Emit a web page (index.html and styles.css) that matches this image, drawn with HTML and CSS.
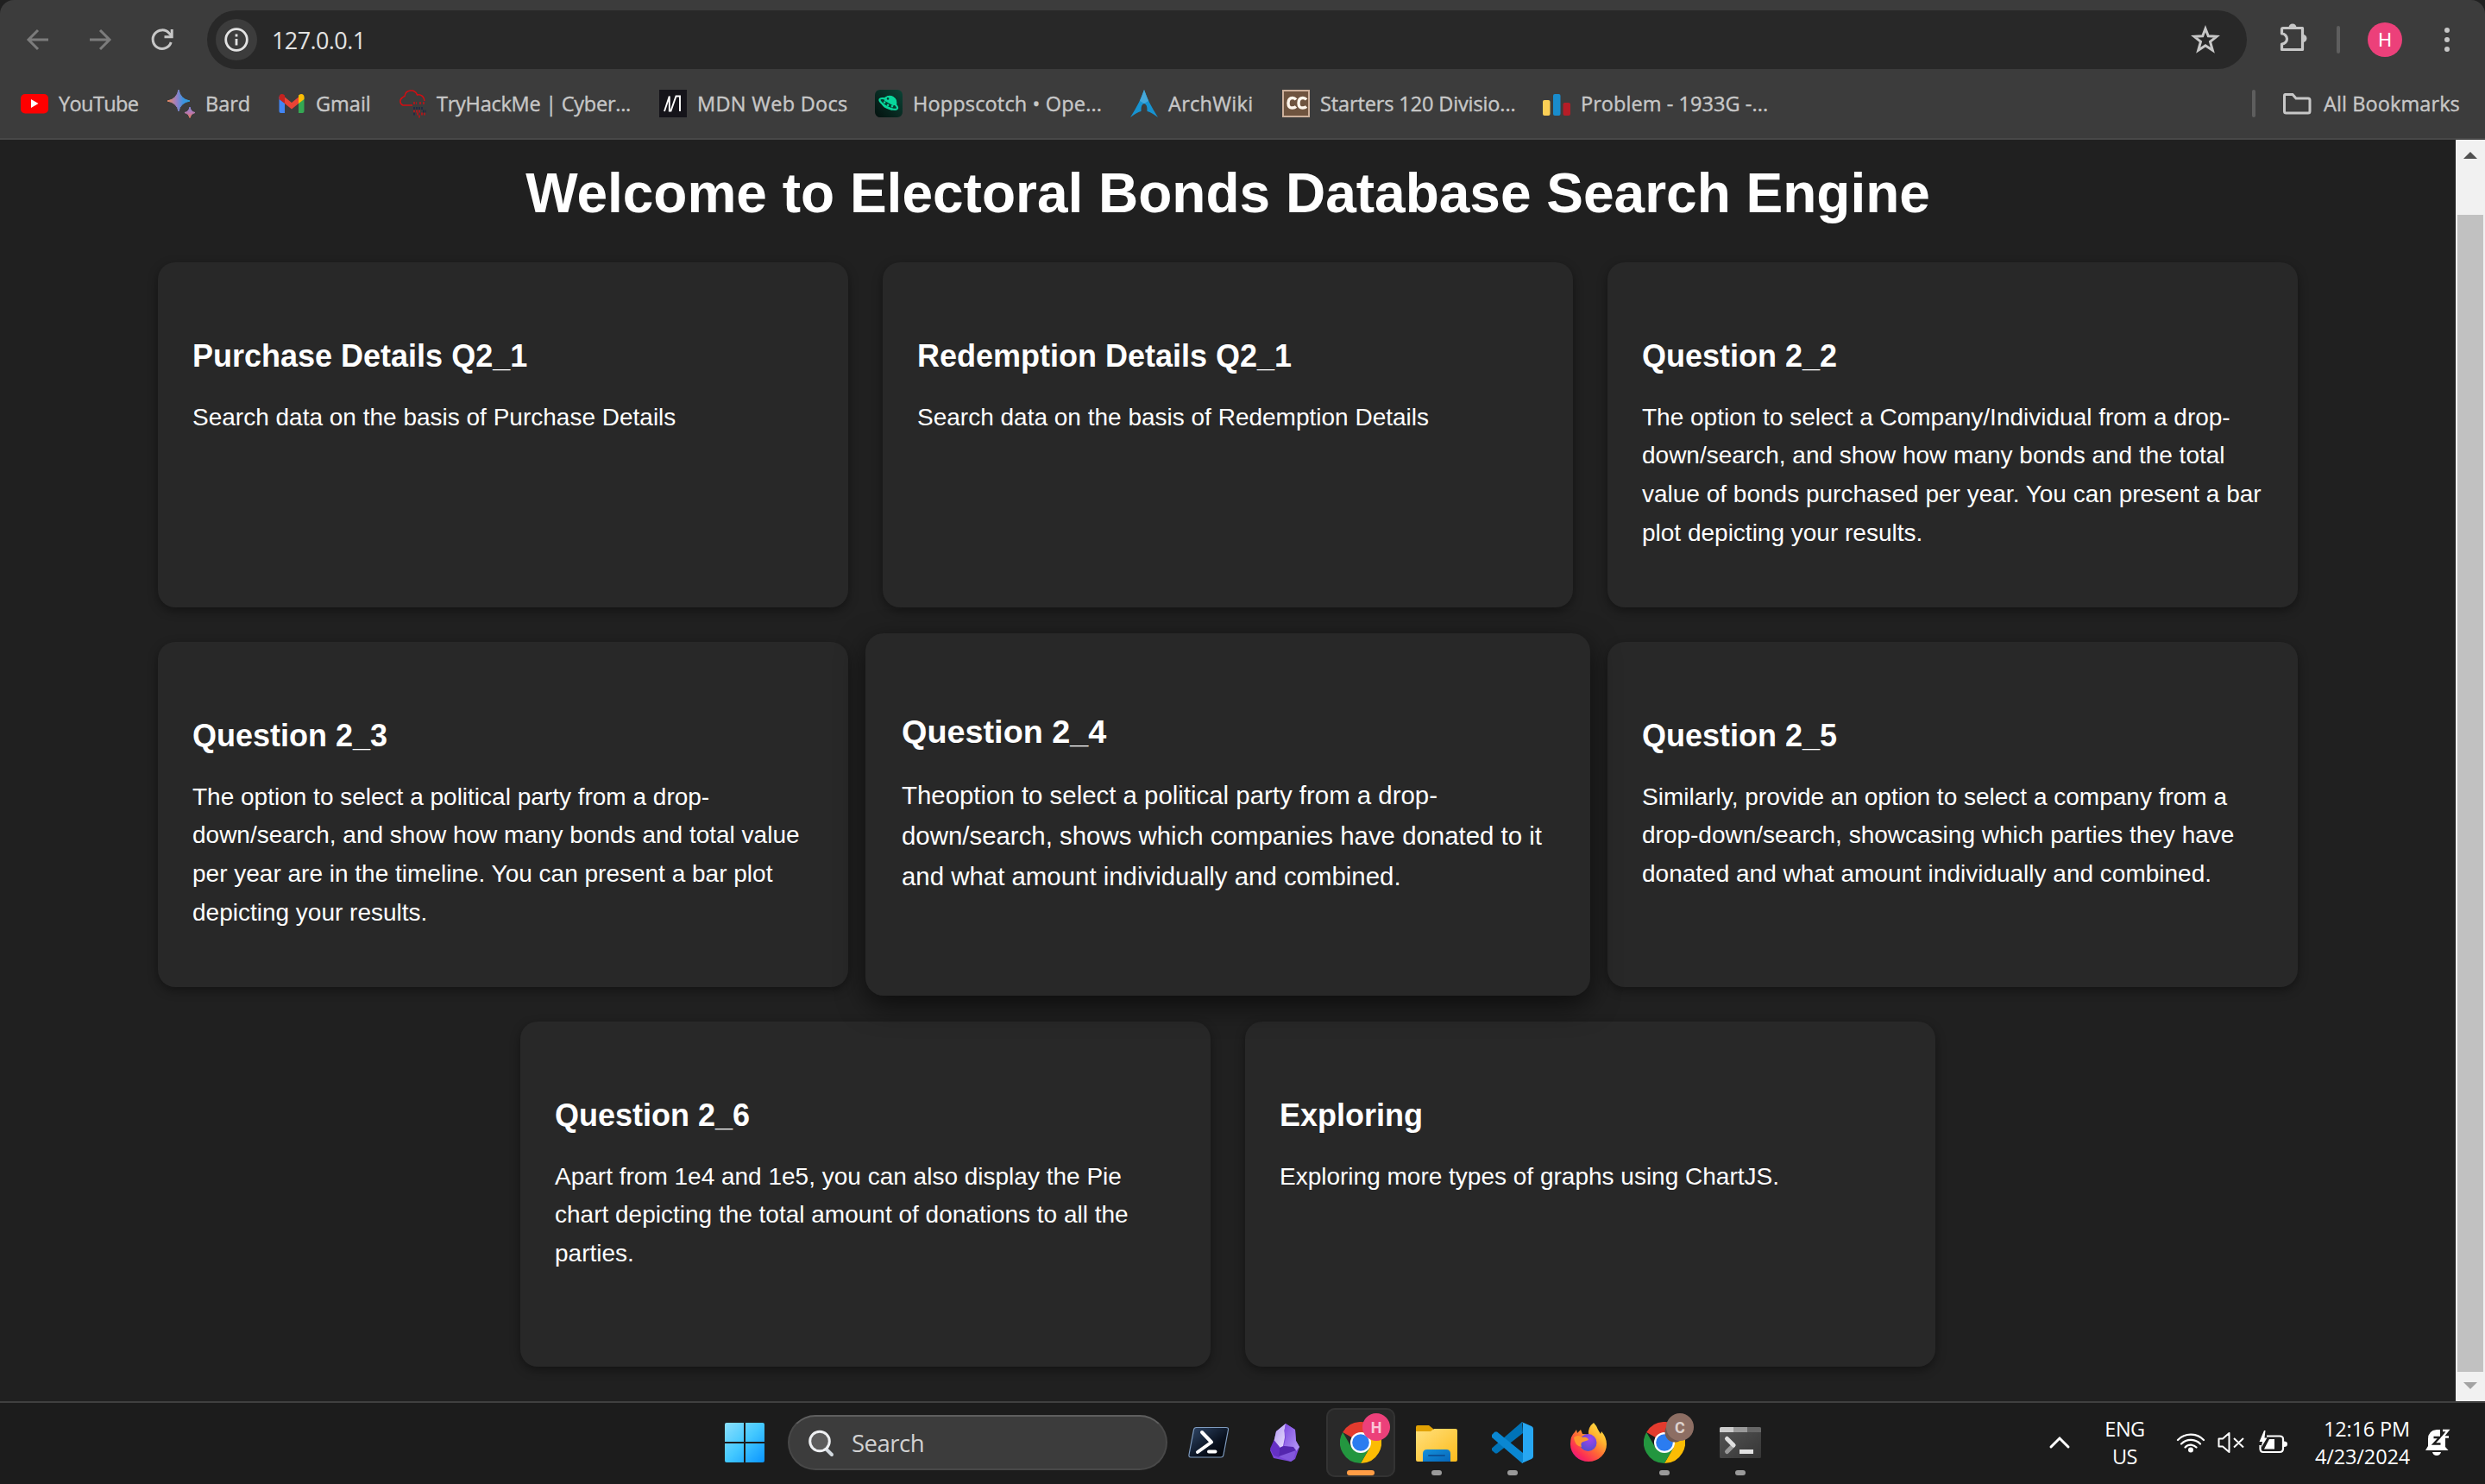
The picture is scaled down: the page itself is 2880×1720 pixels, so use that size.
FILE: index.html
```html
<!DOCTYPE html>
<html lang="en">
<head>
<meta charset="utf-8">
<title>Electoral Bonds Database Search Engine</title>
<link rel="stylesheet" href="styles.css">
</head>
<body>
<svg width="0" height="0" class="defs" aria-hidden="true">
  <defs>
    <linearGradient id="bard" x1="0" y1="0" x2="1" y2="0"><stop offset="0" stop-color="#f08a5c"/><stop offset=".4" stop-color="#9a7fc4"/><stop offset=".7" stop-color="#3d93e0"/><stop offset="1" stop-color="#2aa0e0"/></linearGradient>
    <linearGradient id="bard2" x1="0" y1="0" x2="0" y2="1"><stop offset="0" stop-color="#7f86e0"/><stop offset=".6" stop-color="#c078a8"/><stop offset="1" stop-color="#f0805c"/></linearGradient>
    <linearGradient id="hop" x1="1" y1="0" x2="0" y2="1"><stop offset="0" stop-color="#0b4436"/><stop offset="1" stop-color="#04110e"/></linearGradient>
    <linearGradient id="win" x1="0" y1="0" x2="46" y2="46" gradientUnits="userSpaceOnUse"><stop offset="0" stop-color="#8be0fd"/><stop offset=".5" stop-color="#43c8ff"/><stop offset="1" stop-color="#0a95ff"/></linearGradient>
    <linearGradient id="ps" x1="0" y1="0" x2="1" y2="1"><stop offset="0" stop-color="#31496a"/><stop offset=".6" stop-color="#0a1220"/><stop offset="1" stop-color="#000"/></linearGradient>
    <linearGradient id="folder" x1="0" y1="0" x2="1" y2="1"><stop offset="0" stop-color="#ffe07c"/><stop offset="1" stop-color="#fdbb1c"/></linearGradient>
    <linearGradient id="tray" x1="0" y1="0" x2="1" y2="1"><stop offset="0" stop-color="#1391dc"/><stop offset="1" stop-color="#0766b8"/></linearGradient>
    <linearGradient id="fox" x1="1" y1="0" x2=".2" y2="1"><stop offset="0" stop-color="#fff44f"/><stop offset=".35" stop-color="#ffb42e"/><stop offset=".6" stop-color="#ff6a35"/><stop offset=".85" stop-color="#fb2b57"/><stop offset="1" stop-color="#e3158a"/></linearGradient>
    <radialGradient id="globe" cx=".6" cy=".3" r=".8"><stop offset="0" stop-color="#a044ee"/><stop offset="1" stop-color="#4a4fc8"/></radialGradient>
    <linearGradient id="obs" x1="0" y1="0" x2="1" y2="1"><stop offset="0" stop-color="#b49af2"/><stop offset="1" stop-color="#e6dcfc"/></linearGradient>
    <linearGradient id="obsr" x1="0" y1="0" x2="1" y2="1"><stop offset="0" stop-color="#7c48e0"/><stop offset="1" stop-color="#b79bf6"/></linearGradient>
    <linearGradient id="term" x1="0" y1="0" x2="1" y2="1"><stop offset="0" stop-color="#555"/><stop offset="1" stop-color="#363636"/></linearGradient>
    <symbol id="chrome" viewBox="0 0 48 48">
      <path d="M24 12H44.800A24 24 0 0 1 24 48L34.400 30z" fill="#fbbc04"/>
      <path d="M3.200 12A24 24 0 0 1 44.800 12H24L13.600 18z" fill="#e33b2e"/>
      <path d="M3.200 12 13.600 30 24 36 34.400 30 24 48A24 24 0 0 1 3.200 12z" fill="#23963f"/>
      <circle cx="24" cy="24" r="12" fill="#fff"/><circle cx="24" cy="24" r="9.800" fill="#2b7cf0"/>
    </symbol>
  </defs>
</svg>

<header class="browser">
  <div class="toolbar">
    <svg class="nav-icon dim" viewBox="0 0 32 32"><path d="M28 16H6M16 5 5 16l11 11"/></svg>
    <svg class="nav-icon dim" viewBox="0 0 32 32"><path d="M4 16h22M16 5l11 11-11 11"/></svg>
    <svg class="nav-icon" viewBox="0 0 32 32"><path d="M26.200 19A10.800 10.800 0 1 1 24 8.500L27 11.500"/><path d="M27.200 4V12.700H18.500"/></svg>
    <div class="address">
      <span class="site-info"><svg viewBox="0 0 32 32"><circle cx="16" cy="16" r="12.300"/><path d="M16 15v7.500M16 9.500v3"/></svg></span>
      <span class="url">127.0.0.1</span>
      <svg class="star" viewBox="0 0 32 32"><path d="M16 3.200 19.300 11.700 29 12.300 21.500 18.300 24.300 28.200 16 22.700 7.700 28.200 10.500 18.300 3 12.300 12.700 11.700Z"/></svg>
    </div>
    <svg class="puzzle" viewBox="0 0 36 36"><path class="line" d="M6 6.500H28.500V31.500H4.500V25A4.500 4.500 0 0 0 4.500 13V8Q4.500 6.500 6 6.500Z"/><path class="solid" d="M12.500 6a4.500 4.500 0 0 1 9 0zM29 14a4.500 4.500 0 0 1 0 9z"/></svg>
    <span class="divider"></span>
    <span class="avatar">H</span>
    <svg class="menu" viewBox="0 0 8 30"><circle cx="4" cy="4" r="3"/><circle cx="4" cy="15" r="3"/><circle cx="4" cy="26" r="3"/></svg>
  </div>
  <div class="bookmarks">
    <nav class="links">
      <a><svg viewBox="0 0 32 32"><rect y="5" width="32" height="22.500" rx="5" fill="#f00"/><path d="M12 11v10l8.500-5z" fill="#fff"/></svg><span class="bm-youtube">YouTube</span></a>
      <a><svg viewBox="0 0 32 32"><path d="M13 0Q15 11 26 13Q15 15 13 25Q11 15 0 13Q11 11 13 0Z" fill="url(#bard)" stroke="url(#bard)"/><path d="M26 20Q27 25.500 32 26.500Q27 27.500 26 32.500Q25 27.500 20 26.500Q25 25.500 26 20Z" fill="url(#bard2)" stroke="url(#bard2)"/></svg><span>Bard</span></a>
      <a><svg viewBox="0 0 32 32"><path d="M1.500 8v17a2 2 0 0 0 2 2H8V12z" fill="#4285f4"/><path d="M24 12v15h4.500a2 2 0 0 0 2-2V8z" fill="#34a853"/><path d="M8 8.500 16 15l8-6.500V16l-8 6.500L8 16z" fill="#ea4335"/><path d="M1.500 8.500C1.500 5 5 4 8 6.500V16l-6.500-5z" fill="#c5221f"/><path d="M30.500 8.500C30.500 5 27 4 24 6.500V16l6.500-5z" fill="#fbbc04"/></svg><span>Gmail</span></a>
      <a><svg viewBox="0 0 32 32"><path d="M16 18H5A5 5 0 0 1 4.500 9 8 8 0 0 1 7 7.500 7.500 7.500 0 0 1 21.500 6 7 7 0 0 1 30 13" fill="none" stroke="#d40d12" stroke-width="1.500"/><path d="M17 15.500h4m3 0h2m2 0h3M17 25h8M21 28h2m3 0h6M23 31h3" stroke="#a51a1d" stroke-width="3" stroke-dasharray="2 1"/><path d="M17 21.500h12M28 25h4M17 28h3" stroke="#212c42" stroke-width="3" stroke-dasharray="2 1"/></svg><span class="bm-thm">TryHackMe | Cyber...</span></a>
      <a><svg viewBox="0 0 32 32"><path fill="#15141a" d="M0 0h32v32H0z"/><path d="M5.800 25 11.300 8H12.300V25H13.300L18.800 8M17.300 8V25M17.300 25 23.300 8H24.300V25" fill="none" stroke="#fff" stroke-width="0"/><path d="M6 25 11.800 7.500V24.500H13.500L19.500 7.500H24V25" fill="none" stroke="#fff" stroke-width="1.900"/></svg><span class="bm-mdn">MDN Web Docs</span></a>
      <a><svg viewBox="0 0 32 32"><rect width="32" height="32" rx="6" fill="url(#hop)"/><g transform="rotate(28 16 16)"><path d="M8 15A8.500 8.500 0 0 1 25 15V19A9 5 0 0 1 8 19Z" fill="#08d89c"/><ellipse cx="16" cy="16.500" rx="11.500" ry="4" fill="#073c30" stroke="#08d89c" stroke-width="2.200"/><path d="M9 12A8 8 0 0 1 24 12L22 15.500H10Z" fill="#08d89c"/><g fill="#08d89c"><circle cx="11" cy="17" r="1.300"/><circle cx="16" cy="18" r="1.300"/><circle cx="21" cy="17" r="1.300"/></g><circle cx="12.500" cy="11.500" r="1.300" fill="#073c30"/></g></svg><span class="bm-hop">Hoppscotch • Ope...</span></a>
      <a><svg viewBox="0 0 32 32"><path d="M16 0Q12 13 0 32Q8 26 12.500 25Q12 17 16 16Q20 17 19.500 25Q24 26 32 32Q20 13 16 0Z" fill="#1793d1"/><path d="M16 0 11 13 16 16l5-3z" fill="#45a8db"/></svg><span class="bm-arch">ArchWiki</span></a>
      <a><svg viewBox="0 0 32 32"><path fill="#6f543f" stroke="#cdb09b" stroke-width="2" d="M1 1h30v30H1z"/><path d="M16 11.500Q14.500 9.500 12 9.500Q7 9.500 7 15.500T12 21Q14.500 21 16 19.500M28 11.500Q26.500 9.500 24 9.500Q19 9.500 19 15.500T24 21Q26.500 21 28 19.500" fill="none" stroke="#fff6ec" stroke-width="3.400"/></svg><span class="bm-starters">Starters 120 Divisio...</span></a>
      <a><svg viewBox="0 0 32 32"><rect y="12" width="8.500" height="18" rx="2" fill="#fbcf56"/><rect x="12" y="5" width="8.500" height="25" rx="2" fill="#198ccc"/><rect x="23.500" y="15" width="8.500" height="15" rx="2" fill="#b51d27"/></svg><span class="bm-problem">Problem - 1933G -...</span></a>
    </nav>
    <span class="divider"></span>
    <a class="all"><svg class="folder" viewBox="0 0 36 28"><path d="M4.500 3.500H13L17 8H31Q33 8 33 10V23Q33 25 31 25H5.500Q3.500 25 3.500 23V5Q3.500 3.500 4.500 3.500Z"/></svg><span>All Bookmarks</span></a>
  </div>
</header>

<main class="viewport">
  <div class="page">
    <h1>Welcome to Electoral Bonds Database Search Engine</h1>
    <section class="cards">
      <article class="card"><h2>Purchase Details Q2_1</h2><p>Search data on the basis of Purchase Details</p></article>
      <article class="card"><h2>Redemption Details Q2_1</h2><p>Search data on the basis of Redemption Details</p></article>
      <article class="card"><h2>Question 2_2</h2><p>The option to select a Company/Individual from a drop-down/search, and show how many bonds and the total value of bonds purchased per year. You can present a bar plot depicting your results.</p></article>
      <article class="card"><h2>Question 2_3</h2><p>The option to select a political party from a drop-down/search, and show how many bonds and total value per year are in the timeline. You can present a bar plot depicting your results.</p></article>
      <article class="card hovered"><h2>Question 2_4</h2><p>Theoption to select a political party from a drop-down/search, shows which companies have donated to it and what amount individually and combined.</p></article>
      <article class="card"><h2>Question 2_5</h2><p>Similarly, provide an option to select a company from a drop-down/search, showcasing which parties they have donated and what amount individually and combined.</p></article>
      <article class="card"><h2>Question 2_6</h2><p>Apart from 1e4 and 1e5, you can also display the Pie chart depicting the total amount of donations to all the parties.</p></article>
      <article class="card"><h2>Exploring</h2><p>Exploring more types of graphs using ChartJS.</p></article>
    </section>
  </div>
  <div class="scrollbar">
    <svg class="up" viewBox="0 0 16 8"><path d="M0 8 8 0l8 8z"/></svg>
    <div class="thumb"></div>
    <svg class="down" viewBox="0 0 16 8"><path d="M0 0h16L8 8z"/></svg>
  </div>
</main>

<footer class="taskbar">
  <div class="apps">
    <svg class="start" viewBox="0 0 46 46"><path fill="url(#win)" d="M2 0H22V22H0V2Q0 0 2 0ZM24 0H44Q46 0 46 2V22H24ZM0 24H22V46H2Q0 46 0 44ZM24 24H46V44Q46 46 44 46H24Z"/></svg>
    <div class="search">
      <svg viewBox="0 0 30 32"><path d="M20 23 27 30" stroke="#d2d9df" stroke-width="4" stroke-linecap="round"/><circle cx="13" cy="14.500" r="11.300" fill="#5c5c5c" stroke="#eef0f2" stroke-width="3"/></svg>
      <span>Search</span>
    </div>
    <div class="tile"><svg viewBox="0 0 48 48"><path d="M9.500 6.500H44Q47 6.500 46.500 9L41 38Q40.500 41 38 41H3Q.5 41 1 38L6.500 9Q7 6.500 9.500 6.500Z" fill="url(#ps)" stroke="#7f9cc0" stroke-width="1.200"/><path d="M16 12 27 23.500 11 35M24 34.500H31.500" fill="none" stroke="#fff" stroke-width="4" stroke-linecap="round" stroke-linejoin="round"/></svg></div>
    <div class="tile"><svg viewBox="0 0 48 48"><path d="M25 2 14 11 11 24 7 33 11 42 31 46 36 43 41 29 37 22 36 9Z" fill="#7a46d8"/><path d="M25 2 14 11 11.500 22 18 30 22 28 24 18 23.500 10Z" fill="url(#obs)"/><path d="M25 2 23.500 10 25 18 23 28 34 30 37 34 41 29 37 22 36 9Z" fill="url(#obsr)"/><path d="M11.500 21 7 31 11 39 17 41 18 29Z" fill="#6530c4"/><path d="M18 30 23 28 34 29 37 33 33 42 17 40Z" fill="#5426ae"/><path d="M17 40 37 33 34 44 31 46Z" fill="#8257dc"/></svg></div>
    <div class="tile active"><svg viewBox="0 0 48 48"><use href="#chrome"/></svg><span class="badge pink">H</span><i class="run wide"></i></div>
    <div class="tile"><svg viewBox="0 0 48 48"><path d="M2 4H15L20 8V14H0V6Q0 4 2 4Z" fill="#e2a203"/><path d="M0 11H17L21 8H46Q48 8 48 10V44Q48 46 46 46H2Q0 46 0 44Z" fill="url(#folder)"/><path d="M8 46V37Q8 32 13 32H35Q40 32 40 37V46Z" fill="url(#tray)"/><path d="M15 39H33" stroke="#0b539a" stroke-width="2" stroke-linecap="round"/></svg><i class="run"></i></div>
    <div class="tile"><svg viewBox="0 0 48 48"><path d="M35 0 0 30.500V33L4 36.500 6 36.500 36 13Z" fill="#0073b7"/><path d="M0 15 3.500 11.500 6 11.500 36 36V48L34.500 47.500 0 18Z" fill="#0a87d2"/><path d="M34.500 0 46 5Q48 6 48 8V40Q48 42 46 43L34.500 48Q36 47 36 45V3Q36 1 34.500 0Z" fill="#27a7f2"/></svg><i class="run"></i></div>
    <div class="tile"><svg viewBox="0 0 48 48"><path d="M30 1Q33 4 35 9L38 14 39 11Q45 18 45 26A21 20 0 0 1 3 26Q3 16 8 12L10 9 11 13 15 9 17 14Q21 14 24 15Q23 6 30 1Z" fill="url(#fox)"/><circle cx="23.500" cy="24" r="10" fill="url(#globe)"/><path d="M7 18Q12 14 17 18Q23 17 24 21L18 23Q14 24 16 29Q8 28 7 18Z" fill="#ff972d"/></svg></div>
    <div class="tile"><svg viewBox="0 0 48 48"><use href="#chrome"/><circle cx="36" cy="12" r="11.500" fill="#705850"/></svg><span class="badge brown">C</span><i class="run"></i></div>
    <div class="tile"><svg viewBox="0 0 48 48"><rect y="6" width="48" height="36" rx="1.500" fill="url(#term)"/><path d="M0 12V8Q0 6 2 6H16V12Z" fill="#ccc"/><path d="M16 6H32V12H16Z" fill="#999"/><path d="M32 6H46Q48 6 48 8V12H32Z" fill="#666"/><path d="M8.500 34.500 16 27" stroke="#999" stroke-width="5" stroke-linecap="round"/><path d="M8.500 19.500 16 27" stroke="#e0e0e0" stroke-width="5" stroke-linecap="round"/><path d="M23 32H39V37H23Z" fill="#e2e2e2"/></svg><i class="run"></i></div>
  </div>
  <div class="systray">
    <svg class="chevron" viewBox="0 0 24 14"><path d="M2 12 12 2 22 12"/></svg>
    <div class="lang"><span>ENG</span><span>US</span></div>
    <svg class="wifi" viewBox="0 0 34 26"><circle cx="17" cy="21.500" r="3"/><path d="M2 10A21 21 0 0 1 32 10M6 14.500A15.500 15.500 0 0 1 28 14.500M10.500 18.500A9 9 0 0 1 23.500 18.500"/></svg>
    <svg class="volume" viewBox="0 0 32 26"><path d="M1.500 8.500H6L13.500 2V24L6 17.500H1.500ZM19 8 30 18.500M30 8 19 18.500"/></svg>
    <svg class="battery" viewBox="0 0 36 28"><path class="line" d="M10 6.500H25Q29 6.500 29 10V21Q29 25 25 25H6Q2.500 25 2.500 21V17"/><path d="M7 21.500 13 10H19V21.500ZM30 12.500Q34 12.500 34 15.800T30 19ZM7 0 1.500 13H5L3.500 20 10.500 8.500H7.500L8.500 0Z"/></svg>
    <div class="clock"><span>12:16 PM</span><span>4/23/2024</span></div>
    <svg class="bell" viewBox="0 0 28 32"><path d="M3 12Q3 2 13 1L17 1V9H23V21L26.500 25H0L3 20ZM8 27H18Q17 31 13 31T8 27Z"/><path class="zz" d="M9.500 10H16.500L9.500 17.500H17.500"/><path class="zw" d="M20 2H26L20 9.500H27"/></svg>
  </div>
</footer>
</body>
</html>
```
FILE: styles.css
```css
* { box-sizing: border-box; }

body {
  margin: 0;
  width: 2880px;
  height: 1720px;
  display: flex;
  flex-direction: column;
  overflow: hidden;
  background: #202020;
  font-family: "Liberation Sans", Arial, sans-serif;
  color: #fff;
}

svg { display: block; flex: none; overflow: visible; }
.defs { position: absolute; }

/* Browser chrome */
.browser {
  height: 162px;
  flex: none;
  background: #3c3c3c;
  border-bottom: 2px solid #484848;
  border-radius: 16px 16px 0 0;
  font-family: "Open Sans", "Noto Sans", sans-serif;
}

.toolbar {
  height: 92px;
  display: flex;
  align-items: center;
  padding: 0 40px 0 28px;
}

.nav-icon {
  width: 32px;
  height: 32px;
  margin-right: 40px;
  fill: none;
  stroke: #c7c7c7;
  stroke-width: 3;
}
.nav-icon.dim { stroke: #7c7c7c; }

.address {
  width: 2364px;
  height: 68px;
  margin-left: -4px;
  display: flex;
  align-items: center;
  padding: 0 32px 0 10px;
  border-radius: 34px;
  background: #282828;
}
.site-info {
  width: 48px;
  height: 48px;
  display: grid;
  place-items: center;
  border-radius: 50%;
  background: #3c3c3c;
}
.site-info svg { width: 32px; height: 32px; fill: none; stroke: #e3e3e3; stroke-width: 2.8; }
.url {
  flex: 1;
  padding-left: 17px;
  font-size: 27px;
  letter-spacing: -0.6px;
  color: #e3e3e3;
}
.star { width: 32px; height: 32px; fill: none; stroke: #c7c7c7; stroke-width: 3; }
.puzzle { width: 36px; height: 36px; margin: -4px 32px 0 36px; }
.puzzle .line { fill: none; stroke: #c7c7c7; stroke-width: 3.2; stroke-linejoin: round; }
.puzzle .solid { fill: #c7c7c7; }
.divider { width: 4px; height: 32px; flex: none; border-radius: 2px; background: #5e5e5e; }
.avatar {
  width: 40px;
  height: 40px;
  margin: 0 auto 0 32px;
  display: grid;
  place-items: center;
  border-radius: 50%;
  background: #ec407a;
  font-family: Roboto, sans-serif;
  font-size: 22px;
}
.menu { width: 8px; height: 30px; fill: #c7c7c7; }

.bookmarks {
  height: 56px;
  display: flex;
  align-items: center;
  padding: 0 24px;
  font-size: 23.5px;
  font-weight: 500;
  -webkit-text-stroke: 0.4px #c7c7c7;
  color: #c7c7c7;
}
.links {
  width: 2586px;
  display: grid;
  grid-template-columns: 170px 128px 140px 302px 250px 296px 176px 302px 1fr;
}
.bookmarks a { display: flex; align-items: center; gap: 12px; white-space: nowrap; }
.bookmarks span { margin-top: -1px; }
.links svg { width: 32px; height: 32px; }
.bm-youtube { letter-spacing: -0.6px; }
.bm-thm { letter-spacing: -0.25px; }
.bm-mdn { letter-spacing: 0.3px; }
.bm-hop { letter-spacing: 0.15px; }
.bm-arch { letter-spacing: 0.3px; }
.bm-starters { letter-spacing: -0.12px; }
.bm-problem { letter-spacing: 0.06px; }
.all { margin-left: 30px; letter-spacing: 0.1px; }
.bookmarks .all { gap: 13px; }
.folder { width: 36px; height: 28px; fill: none; stroke: #c7c7c7; stroke-width: 3; }

/* Web page */
.viewport { height: 1462px; flex: none; display: flex; }
.page { flex: 1; overflow: hidden; }

h1 {
  height: 124px;
  margin: 0 0 18px;
  text-align: center;
  font-size: 64px;
  line-height: 124px;
}
.cards {
  display: flex;
  flex-wrap: wrap;
  justify-content: center;
  gap: 40px;
  padding: 0 160px;
}
.card {
  width: 800px;
  height: 400px;
  padding: 80px 40px 0;
  border-radius: 20px;
  background: #282828;
  box-shadow: 0 4px 12px rgba(0, 0, 0, 0.4);
}
.card h2 { margin: 0 0 20px; font-size: 36px; line-height: 57.6px; }
.card p { margin: 0; font-size: 28px; line-height: 44.8px; }
.card.hovered {
  transform: scale(1.05);
  box-shadow: 0 10px 30px rgba(0, 0, 0, 0.6);
}

.scrollbar {
  width: 34px;
  display: flex;
  flex-direction: column;
  align-items: center;
  padding: 14px 0;
  background: #f1f1f1;
}
.scrollbar svg { width: 16px; height: 8px; }
.up { fill: #505050; }
.down { fill: #a3a3a3; }
.thumb { width: 30px; height: 1341px; margin: 65px 0 12px; background: #c1c1c1; }

/* Taskbar */
.taskbar {
  height: 96px;
  flex: none;
  display: flex;
  justify-content: space-between;
  padding-left: 840px;
  border-top: 2px solid #404040;
  background: #1c1c1c;
  font-family: "Open Sans", "Noto Sans", sans-serif;
}
.apps { display: flex; align-items: center; height: 92px; }
.start { width: 46px; height: 46px; margin-right: 27px; }
.search {
  width: 440px;
  height: 64px;
  margin-right: 8px;
  display: flex;
  align-items: center;
  gap: 20px;
  padding-left: 22px;
  border: 2px solid #484848;
  border-top-color: #5e5e5e;
  border-radius: 32px;
  background: #3c3c3c;
  font-size: 27.5px;
  letter-spacing: -0.5px;
  color: #d2d2d2;
}
.search svg { width: 30px; height: 32px; }
.tile {
  position: relative;
  width: 80px;
  height: 80px;
  margin-right: 8px;
  display: grid;
  place-items: center;
  border-radius: 10px;
}
.tile.active { background: #292929; box-shadow: inset 0 0 0 2px #333; }
.tile svg { width: 48px; height: 48px; }
.badge {
  position: absolute;
  top: 6px;
  right: 6px;
  width: 32px;
  height: 32px;
  display: grid;
  place-items: center;
  border-radius: 50%;
  font: 700 18px Roboto, sans-serif;
}
.pink { background: #ec407a; color: #fbc5d7; }
.brown { background: #8d6e63; color: #ddd2ce; }
.run {
  position: absolute;
  bottom: 2px;
  left: 34px;
  width: 12px;
  height: 6px;
  border-radius: 3px;
  background: #9a9a9a;
}
.run.wide { left: 24px; width: 32px; background: #ff9d45; }

.systray {
  display: flex;
  align-items: center;
  height: 92px;
  padding-right: 41px;
  font-size: 23.5px;
  line-height: 32px;
}
.systray svg { fill: #fff; }
.chevron { width: 24px; height: 14px; margin-right: 40px; }
.systray .chevron, .systray .volume, .systray .battery .line { fill: none; stroke: #fff; }
.chevron { stroke-width: 3; stroke-linecap: round; }
.lang { width: 47px; display: flex; flex-direction: column; align-items: center; letter-spacing: -0.5px; }
.wifi { width: 34px; height: 26px; margin: 0 14px 0 36px; }
.wifi path { fill: none; stroke: #fff; stroke-width: 2.2; stroke-linecap: round; }
.volume { width: 32px; height: 26px; margin-right: 15px; stroke-width: 2; stroke-linejoin: round; }
.battery { width: 36px; height: 28px; margin-right: 28px; }
.battery .line { stroke-width: 2.2; }
.clock { width: 112px; display: flex; flex-direction: column; align-items: flex-end; letter-spacing: -0.15px; white-space: nowrap; }
.bell { width: 28px; height: 32px; margin-left: 18px; }
.systray .bell .zz { fill: none; stroke: #1c1c1c; stroke-width: 2.4; }
.systray .bell .zw { fill: none; stroke: #fff; stroke-width: 2.4; }
```
